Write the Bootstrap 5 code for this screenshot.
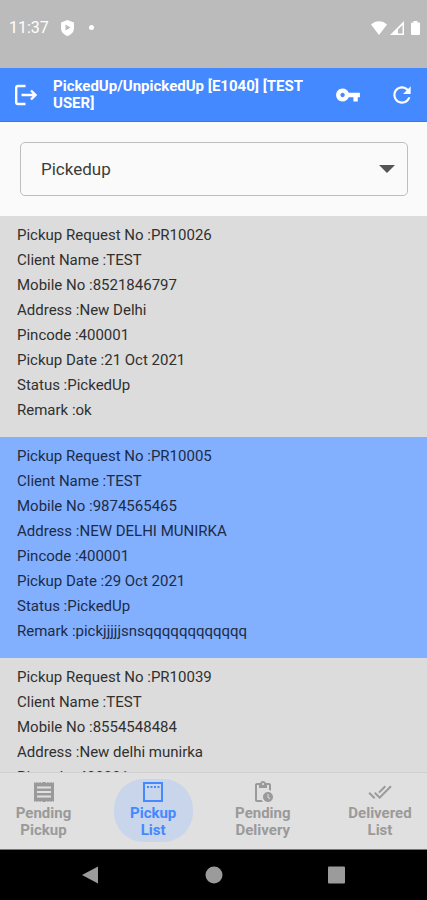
<!DOCTYPE html>
<html lang="en">
<head>
<meta charset="utf-8">
<meta name="viewport" content="width=device-width, initial-scale=1">
<title>PickedUp/UnpickedUp</title>
<link href="https://cdn.jsdelivr.net/npm/bootstrap@5.3.0/dist/css/bootstrap.min.css" rel="stylesheet">
<style>
  body { font-family: Roboto, "Liberation Sans", sans-serif; background: #fafafa; color: #303030; }
  svg { display: block; fill: currentColor; flex: none; }
  .status-strip { background: #bbb; height: 68px; padding: 0 7px 13px 9px; font-size: 16px; }
  .status-notes { gap: 15px; margin-left: 12px; }
  .status-signals { gap: 3px; }
  .app-header { background: #4489ff; min-height: 54px; padding: 0 12px 0 14px; border-bottom: 1px solid #2f7bf5; }
  .app-title { font-size: 15px; line-height: 17px; font-weight: 700; }
  .filter-area { padding: 20px 19px 20px 20px; }
  .filter-select {
    --bs-form-select-bg-img: url("data:image/svg+xml,%3csvg xmlns='http://www.w3.org/2000/svg' viewBox='0 0 16 8'%3e%3cpath fill='%23555' d='M0 0h16L8 8z'/%3e%3c/svg%3e");
    height: 54px; padding: 2px 40px 0 20px; font-size: 17px; color: #3c3c3c; background-color: #fafafa;
    border: 1px solid #bebebe; border-radius: 5px; background-position: right 12px center; background-size: 16px 8px;
  }
  .pickup-item { background: #dcdcdc; padding: 7px 17px 14px; font-size: 15px; line-height: 25px; }
  .pickup-item.is-selected { background: #82b0ff; color: #1c2b48; }
  .tab-strip { background: #e0e0e0; border-top: 1px solid #d0d0d0; padding: 6px 0 7px 4px; }
  .tab-link { color: #9a9a9a; font-size: 15px; line-height: 17px; font-weight: 700; min-width: 79px; padding: 1px 5px 3px; border-radius: 30px; }
  .tab-link:last-child { min-width: 94px; }
  .tab-link svg { margin-bottom: 1px; }
  .tab-link.active { color: #4489ff; background: #c8d5eb; }
  .system-keys { background: #000; height: 51px; color: #9b9b9b; border-top: 1px solid #777; padding: 0 80px; }
</style>
<script src="https://cdn.jsdelivr.net/npm/bootstrap@5.3.0/dist/js/bootstrap.bundle.min.js"></script>
</head>
<body class="vh-100 d-flex flex-column overflow-hidden">
  <div class="status-strip d-flex align-items-center text-white flex-shrink-0">
    <span>11:37</span>
    <div class="status-notes d-flex align-items-center">
      <svg width="13" height="16" viewBox="0 0 13 16" aria-hidden="true"><path fill-rule="evenodd" d="M6.500 0 13 2.500v5.500c0 4-2.700 6.500-6.500 8C2.700 14.500 0 12 0 8V2.500zM4.500 4.500v6l5-3z"/></svg>
      <svg width="5" height="5" viewBox="0 0 5 5" aria-hidden="true"><circle cx="2.500" cy="2.500" r="2.500"/></svg>
    </div>
    <div class="status-signals d-flex align-items-center ms-auto">
      <svg width="16" height="14" viewBox="0 0 16 14" aria-hidden="true"><path d="M0 3.500C4.500-1 11.500-1 16 3.500L8 14z"/></svg>
      <svg width="14" height="14" viewBox="0 0 14 14" aria-hidden="true"><path fill-rule="evenodd" d="M14 0v14H0zM12.500 4 8 8.500v4h4.500z"/></svg>
      <svg class="ms-1" width="9" height="14" viewBox="0 0 9 14" aria-hidden="true"><path d="M2.500 0h4v1.500H8a1 1 0 0 1 1 1V13a1 1 0 0 1-1 1H1a1 1 0 0 1-1-1V2.500a1 1 0 0 1 1-1h1.500z"/></svg>
    </div>
  </div>

  <header class="app-header d-flex align-items-center text-white flex-shrink-0">
    <button type="button" class="btn p-0 border-0 text-white" aria-label="Log out">
      <svg width="23" height="22" viewBox="0 0 23 22"><path fill="none" stroke="currentColor" stroke-width="2.400" d="M11.500 2H4Q2.200 2 2.200 3.800v14.400Q2.200 20 4 20h7.500M7.500 11H21M17 6.500l4.500 4.500-4.500 4.500"/></svg>
    </button>
    <h1 class="app-title flex-grow-1 mb-0 ms-3 me-4">PickedUp/UnpickedUp [E1040] [TEST USER]</h1>
    <button type="button" class="btn p-0 border-0 text-white me-1" aria-label="Change password">
      <svg width="26" height="26" viewBox="0 0 24 24"><path d="M12.650 10C11.830 7.670 9.610 6 7 6c-3.310 0-6 2.690-6 6s2.690 6 6 6c2.610 0 4.830-1.670 5.650-4H17v4h4v-4h2v-4H12.650zM7 14c-1.100 0-2-.9-2-2s.9-2 2-2 2 .9 2 2-.9 2-2 2z"/></svg>
    </button>
    <button type="button" class="btn p-0 border-0 text-white ms-4" aria-label="Refresh">
      <svg width="26" height="26" viewBox="0 0 24 24"><path d="M17.650 6.350C16.200 4.900 14.210 4 12 4c-4.420 0-7.990 3.580-7.990 8s3.570 8 7.990 8c3.730 0 6.840-2.550 7.730-6h-2.080c-.82 2.330-3.040 4-5.650 4-3.310 0-6-2.690-6-6s2.690-6 6-6c1.660 0 3.140.69 4.220 1.780L13 11h7V4l-2.350 2.350z"/></svg>
    </button>
  </header>

  <main class="d-flex flex-column flex-grow-1 overflow-hidden">
    <div class="filter-area flex-shrink-0">
      <label class="visually-hidden" for="statusFilter">Status</label>
      <select id="statusFilter" class="form-select filter-select">
        <option selected>Pickedup</option>
        <option>Unpickedup</option>
      </select>
    </div>
    <ul class="list-unstyled mb-0 flex-grow-1 overflow-hidden">
      <li class="pickup-item">
        <div>Pickup Request No :PR10026</div>
        <div>Client Name :TEST</div>
        <div>Mobile No :8521846797</div>
        <div>Address :New Delhi</div>
        <div>Pincode :400001</div>
        <div>Pickup Date :21 Oct 2021</div>
        <div>Status :PickedUp</div>
        <div>Remark :ok</div>
      </li>
      <li class="pickup-item is-selected">
        <div>Pickup Request No :PR10005</div>
        <div>Client Name :TEST</div>
        <div>Mobile No :9874565465</div>
        <div>Address :NEW DELHI MUNIRKA</div>
        <div>Pincode :400001</div>
        <div>Pickup Date :29 Oct 2021</div>
        <div>Status :PickedUp</div>
        <div>Remark :pickjjjjjsnsqqqqqqqqqqqq</div>
      </li>
      <li class="pickup-item">
        <div>Pickup Request No :PR10039</div>
        <div>Client Name :TEST</div>
        <div>Mobile No :8554548484</div>
        <div>Address :New delhi munirka</div>
        <div>Pincode :400001</div>
      </li>
    </ul>
  </main>

  <nav class="tab-strip d-flex justify-content-between flex-shrink-0" aria-label="Sections">
    <a href="#" class="tab-link d-flex flex-column align-items-center text-center text-decoration-none">
      <svg width="24" height="24" viewBox="0 0 24 24" aria-hidden="true"><path fill-rule="evenodd" d="M2 2l1.500 1L5 2l1.500 1L8 2l1.500 1L11 2h2l1.500 1L16 2l1.500 1L19 2l1.500 1L22 2v20l-1.500-1-1.500 1-1.500-1-1.500 1-1.500-1-1.500 1h-2l-1.500-1L8 22l-1.500-1L5 22l-1.500-1L2 22zM5 6.500v2h14v-2zM5 11v2h14v-2zM5 15.500v2h14v-2z"/></svg>
      <span>Pending<br>Pickup</span>
    </a>
    <a href="#" class="tab-link active d-flex flex-column align-items-center text-center text-decoration-none" aria-current="page">
      <svg width="24" height="24" viewBox="0 0 24 24" aria-hidden="true"><path fill-rule="evenodd" d="M2 2h20v20H2zM4 4v16h16V4zM6 6h2v2H6zM9.500 6h2v2h-2zM13 6h2v2h-2zM16.500 6h2v2h-2z"/></svg>
      <span>Pickup<br>List</span>
    </a>
    <a href="#" class="tab-link d-flex flex-column align-items-center text-center text-decoration-none">
      <svg width="24" height="24" viewBox="0 0 24 24" aria-hidden="true"><path d="M17 12c-2.760 0-5 2.240-5 5s2.240 5 5 5 5-2.240 5-5-2.240-5-5-5zm1.650 7.350L16.500 17.200V14h1v2.790l1.850 1.850-.7.710zM18 3h-3.180C14.400 1.840 13.300 1 12 1s-2.400.84-2.820 2H6c-1.100 0-2 .9-2 2v15c0 1.100.9 2 2 2h6.110c-.59-.57-1.070-1.250-1.420-2H6V5h2v3h8V5h2v5.080c.71.1 1.380.31 2 .6V5c0-1.100-.9-2-2-2zm-6 2c-.55 0-1-.45-1-1s.45-1 1-1 1 .45 1 1-.45 1-1 1z"/></svg>
      <span>Pending<br>Delivery</span>
    </a>
    <a href="#" class="tab-link d-flex flex-column align-items-center text-center text-decoration-none">
      <svg width="24" height="24" viewBox="0 0 24 24" aria-hidden="true"><path d="M18 7l-1.410-1.410-6.340 6.340 1.410 1.410L18 7zm4.240-1.410L11.660 16.170 7.480 12l-1.410 1.410L11.660 19l12-12-1.420-1.410zM.41 13.410L6 19l1.410-1.410L1.830 12 .41 13.410z"/></svg>
      <span>Delivered<br>List</span>
    </a>
  </nav>

  <div class="system-keys d-flex align-items-center justify-content-between flex-shrink-0">
    <button type="button" class="btn p-0 border-0 text-reset" aria-label="Back"><svg width="20" height="20" viewBox="0 0 20 20"><path d="M18 1.500v17L2 10z"/></svg></button>
    <button type="button" class="btn p-0 border-0 text-reset" aria-label="Home"><svg width="18" height="18" viewBox="0 0 18 18"><circle cx="9" cy="9" r="8.500"/></svg></button>
    <button type="button" class="btn p-0 border-0 text-reset" aria-label="Recent apps"><svg width="20" height="20" viewBox="0 0 20 20"><rect x="1" y="1.500" width="17" height="17" rx="1"/></svg></button>
  </div>
</body>
</html>
